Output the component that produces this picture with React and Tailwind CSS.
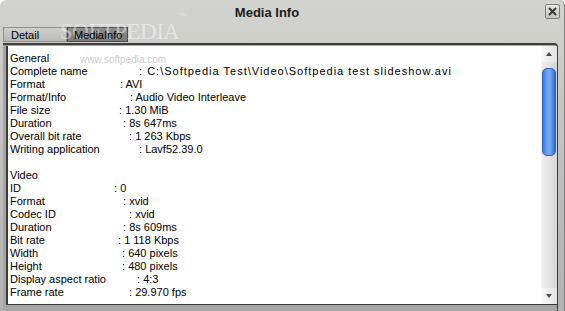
const general = [
  ['Complete name', 'C:\\Softpedia Test\\Video\\Softpedia test slideshow.avi', 'w-[129px]'],
  ['Format', 'AVI', 'w-[110px]'],
  ['Format/Info', 'Audio Video Interleave', 'w-[120px]'],
  ['File size', '1.30 MiB', 'w-[109px]'],
  ['Duration', '8s 647ms', 'w-[113px]'],
  ['Overall bit rate', '1 263 Kbps', 'w-[119px]'],
  ['Writing application', 'Lavf52.39.0', 'w-[129px]'],
]

const video = [
  ['ID', '0', 'w-[104px]'],
  ['Format', 'xvid', 'w-[113px]'],
  ['Codec ID', 'xvid', 'w-[119px]'],
  ['Duration', '8s 609ms', 'w-[113px]'],
  ['Bit rate', '1 118 Kbps', 'w-[108px]'],
  ['Width', '640 pixels', 'w-[112px]'],
  ['Height', '480 pixels', 'w-[112px]'],
  ['Display aspect ratio', '4:3', 'w-[127px]'],
  ['Frame rate', '29.970 fps', 'w-[119px]'],
]

function Row({ label, value, width, wide }) {
  return (
    <div className="flex h-[13px] leading-[13px] whitespace-pre">
      <span className={width}>{label}</span>
      <span className={wide ? 'tracking-[1px]' : ''}>: {value}</span>
    </div>
  )
}

function ScrollBar() {
  return (
    <div className="w-[16px] flex flex-col bg-gradient-to-r from-[#f2f2f2] via-[#e4e4e4] to-[#d6d6d6]">
      <div className="h-[16px] flex items-center justify-center bg-gradient-to-r from-[#fafafa] to-[#e2e2e2]">
        <div className="w-0 h-0 border-l-[3px] border-r-[3px] border-b-[4px] border-l-transparent border-r-transparent border-b-[#4a4a4a]" />
      </div>
      <div className="mt-[6px] mx-[1px] h-[88px] rounded-[5px] border border-[#2a5fc0] bg-gradient-to-r from-[#3a7be4] via-[#86b3f3] to-[#2d6bd8] flex justify-center">
        <div className="w-[2px] h-full bg-[#6aa0ef] opacity-60" />
      </div>
      <div className="flex-1" />
      <div className="h-[16px] flex items-center justify-center bg-gradient-to-r from-[#fafafa] to-[#e2e2e2]">
        <div className="w-0 h-0 border-l-[3px] border-r-[3px] border-t-[4px] border-l-transparent border-r-transparent border-t-[#4a4a4a]" />
      </div>
    </div>
  )
}

export default function App() {
  return (
    <div className="w-[565px] h-[311px] relative overflow-hidden flex flex-col bg-gradient-to-b from-[#d3d3cf] via-[#c0c0be] to-[#b2b2b2] font-['Liberation_Sans',Arial,sans-serif] text-[11px] text-black rounded-t-[6px] border-r border-[#808080]">
      {/* title bar */}
      <div className="h-[26px] shrink-0 relative flex items-center justify-center pr-[30px]">
        <span className="text-[13px] font-bold text-[#1c1c1c]">Media Info</span>
        <div className="absolute right-[4px] top-[4px] w-[15px] h-[15px] rounded-[2px] border border-[#7c7c7c] bg-gradient-to-b from-[#e6e6e4] to-[#c4c4c2] flex items-center justify-center">
          <svg width="9" height="9" viewBox="0 0 9 9">
            <path d="M1 1L8 8M8 1L1 8" stroke="#3a3a3a" strokeWidth="2" />
          </svg>
        </div>
      </div>

      {/* tabs */}
      <div className="h-[17px] shrink-0 flex pl-[3px] pt-[1px]">
        <div className="w-[64px] h-[15px] leading-[14px] pl-[7px] border border-[#8e8e8e] bg-gradient-to-b from-[#cfcfcd] to-[#b9b9b7]">
          <span className="relative z-10">Detail</span>
        </div>
        <div className="w-[61px] h-[15px] leading-[14px] pl-[6px] border border-[#4e4e4e] bg-gradient-to-b from-[#8c8c8c] to-[#7a7a7a]">
          <span className="relative z-10">MediaInfo</span>
        </div>
      </div>

      {/* content frame */}
      <div className="flex-1 ml-[3px] w-[555px] border-t-2 border-r border-[#3e3e3e] rounded-tr-[4px] bg-[#a6a6a6] pt-[1px] pl-[3px] pb-[6px] flex">
        <div className="flex-1 flex border-l-2 border-b border-[#3a3a3a] bg-white">
          <div className="flex-1 pt-[6px] pl-[2px]">
            <div className="h-[13px] leading-[13px]">General</div>
            {general.map(([l, v, w], i) => (
              <Row key={l} label={l} value={v} width={w} wide={i === 0} />
            ))}
            <div className="h-[13px]" />
            <div className="h-[13px] leading-[13px]">Video</div>
            {video.map(([l, v, w]) => (
              <Row key={l + v} label={l} value={v} width={w} />
            ))}
          </div>
          <ScrollBar />
        </div>
      </div>

      {/* watermarks */}
      <div className="absolute left-[60px] top-[19px] font-['Liberation_Serif',serif] text-[23px] leading-[26px] text-white opacity-45 tracking-[-0.5px]">
        SOFTPEDIA<sup className="text-[7px] align-top">™</sup>
      </div>
      <div className="absolute left-[80px] top-[54px] text-[10px] leading-[11px] text-[#cccccc]">www.softpedia.com</div>
    </div>
  )
}
